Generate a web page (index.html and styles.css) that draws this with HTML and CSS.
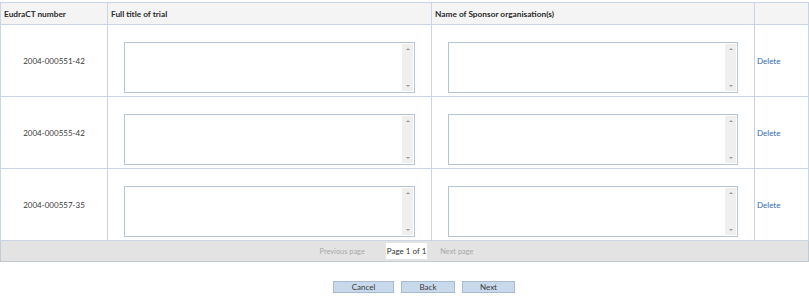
FILE: index.html
```html
<!DOCTYPE html>
<html>
<head>
<meta charset="utf-8">
<link rel="stylesheet" href="styles.css">
</head>
<body>
<table class="grid">
  <colgroup>
    <col class="c-num"><col class="c-title"><col class="c-sponsor"><col class="c-act">
  </colgroup>
  <thead>
    <tr>
      <th>EudraCT number</th>
      <th>Full title of trial</th>
      <th>Name of Sponsor organisation(s)</th>
      <th></th>
    </tr>
  </thead>
  <tbody>
    <tr>
      <td class="num">2004-000551-42</td>
      <td class="field"><div class="ta"><textarea></textarea><div class="sb"><span class="up"></span><span class="dn"></span></div></div></td>
      <td class="field"><div class="ta"><textarea></textarea><div class="sb"><span class="up"></span><span class="dn"></span></div></div></td>
      <td class="act"><a href="#">Delete</a></td>
    </tr>
    <tr>
      <td class="num">2004-000555-42</td>
      <td class="field"><div class="ta"><textarea></textarea><div class="sb"><span class="up"></span><span class="dn"></span></div></div></td>
      <td class="field"><div class="ta"><textarea></textarea><div class="sb"><span class="up"></span><span class="dn"></span></div></div></td>
      <td class="act"><a href="#">Delete</a></td>
    </tr>
    <tr>
      <td class="num">2004-000557-35</td>
      <td class="field"><div class="ta"><textarea></textarea><div class="sb"><span class="up"></span><span class="dn"></span></div></div></td>
      <td class="field"><div class="ta"><textarea></textarea><div class="sb"><span class="up"></span><span class="dn"></span></div></div></td>
      <td class="act"><a href="#">Delete</a></td>
    </tr>
  </tbody>
  <tfoot>
    <tr>
      <td colspan="4" class="pager">
        <div class="pager-in">
          <span class="pg-link pg-prev">Previous page</span>
          <span class="pg-cur">Page 1 of 1</span>
          <span class="pg-link pg-next">Next page</span>
        </div>
      </td>
    </tr>
  </tfoot>
</table>
<div class="buttons">
  <button class="btn b-cancel">Cancel</button>
  <button class="btn b-back">Back</button>
  <button class="btn b-next">Next</button>
</div>
</body>
</html>
```
FILE: styles.css
```css
html, body {
  margin: 0;
  padding: 0;
  background: #ffffff;
}
body {
  font-family: "Lato", "Open Sans", sans-serif;
  font-size: 8px;
  color: #333333;
}
.grid {
  margin-top: 2px;
  width: 808px;
  border-collapse: collapse;
  table-layout: fixed;
}
.c-num { width: 107px; }
.c-title { width: 324px; }
.c-sponsor { width: 323px; }
.c-act { width: 54px; }
.grid th {
  height: 21px;
  padding: 0 3px;
  text-align: left;
  font-weight: 700;
  font-size: 8.3px;
  color: #2a2a2a;
  background: #f4f4f4;
  border: 1px solid #c9d5e2;
  border-bottom: 1px dashed #b8b8b8;
}
.grid tbody td {
  border: 1px solid #c9d5e2;
  height: 71px;
  padding: 0;
  vertical-align: middle;
}
.grid td.num {
  text-align: center;
  color: #3a3a3a;
}
.grid td.field {
  padding: 17px 16px 3px 16px;
  box-sizing: border-box;
}
.ta {
  display: flex;
  height: 51px;
  border: 1px solid #b7c4d3;
  box-sizing: border-box;
  background: #ffffff;
}
.ta textarea {
  flex: 1;
  border: 0;
  margin: 0;
  padding: 2px;
  resize: none;
  overflow: hidden;
  outline: none;
  background: transparent;
  font-family: inherit;
  font-size: 8px;
}
.sb {
  width: 11px;
  margin: 1px 1px 1px 0;
  background: #efefef;
  display: flex;
  flex-direction: column;
  justify-content: space-between;
  align-items: center;
  padding: 4px 0;
  box-sizing: border-box;
}
.sb span {
  width: 0;
  height: 0;
  border-left: 2px solid transparent;
  border-right: 2px solid transparent;
}
.sb .up { border-bottom: 2px solid #9a9a9a; }
.sb .dn { border-top: 2px solid #9a9a9a; }
.grid td.act {
  padding-left: 2px;
}
.act a {
  color: #2d6ab0;
  text-decoration: none;
}
.grid tfoot td.pager {
  height: 20px;
  padding: 0;
  background: #e3e3e3;
  border: 1px solid #c2cad4;
}
.pager-in {
  display: flex;
  justify-content: center;
  align-items: center;
  padding-right: 16px;
}
.pg-link {
  color: #a8a8a8;
  font-size: 7.4px;
}
.pg-prev { margin-right: 21px; }
.pg-next { margin-left: 13px; }
.pg-cur {
  background: #ffffff;
  color: #333333;
  padding: 3px 1px;
}
.buttons {
  display: flex;
  justify-content: center;
  gap: 7px;
  padding-left: 39px;
  margin-top: 19px;
}
.btn {
  height: 12px;
  padding: 0;
  margin: 0;
  border: 1px solid #a8bbd2;
  background: #c9d9ec;
  color: #3a3a3a;
  font-family: inherit;
  font-size: 8px;
  line-height: 10px;
  box-sizing: border-box;
}
.b-cancel { width: 61px; }
.b-back { width: 54px; }
.b-next { width: 53px; }
```
